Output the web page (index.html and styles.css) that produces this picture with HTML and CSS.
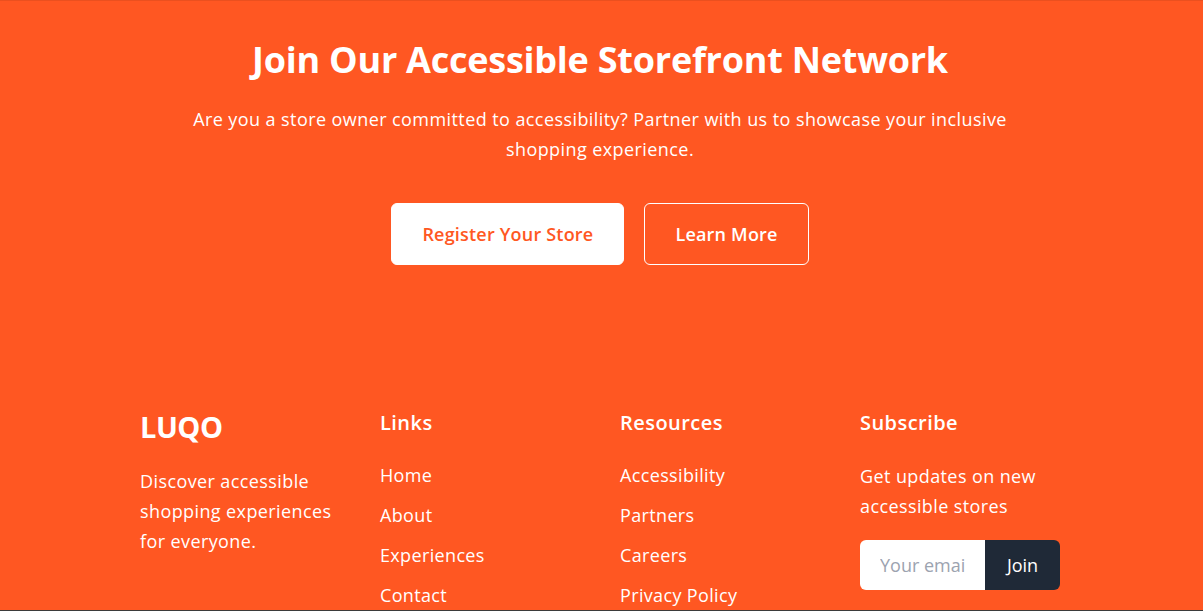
FILE: index.html
```html
<!DOCTYPE html>
<html lang="en">
<head>
<meta charset="utf-8">
<title>LUQO – Join Our Accessible Storefront Network</title>
<link rel="stylesheet" href="styles.css">
</head>
<body>
<div class="page">
  <section class="cta">
    <h1 class="cta-title">Join Our Accessible Storefront Network</h1>
    <p class="cta-text">Are you a store owner committed to accessibility? Partner with us to showcase your inclusive shopping experience.</p>
    <div class="cta-actions">
      <a class="btn btn-solid" href="#">Register Your Store</a>
      <a class="btn btn-outline" href="#">Learn More</a>
    </div>
  </section>
  <footer class="footer">
    <div class="footer-grid">
      <div class="col">
        <div class="brand">LUQO</div>
        <p class="col-text">Discover accessible shopping experiences for everyone.</p>
      </div>
      <div class="col">
        <h3 class="col-title">Links</h3>
        <ul class="col-list">
          <li><a href="#">Home</a></li>
          <li><a href="#">About</a></li>
          <li><a href="#">Experiences</a></li>
          <li><a href="#">Contact</a></li>
        </ul>
      </div>
      <div class="col">
        <h3 class="col-title">Resources</h3>
        <ul class="col-list">
          <li><a href="#">Accessibility</a></li>
          <li><a href="#">Partners</a></li>
          <li><a href="#">Careers</a></li>
          <li><a href="#">Privacy Policy</a></li>
        </ul>
      </div>
      <div class="col">
        <h3 class="col-title">Subscribe</h3>
        <p class="col-text sub-text">Get updates on new accessible stores</p>
        <form class="sub-form">
          <input class="sub-input" type="email" placeholder="Your email" aria-label="Your email">
          <button class="sub-btn" type="button">Join</button>
        </form>
      </div>
    </div>
  </footer>
</div>
</body>
</html>
```
FILE: styles.css
```css
* { box-sizing: border-box; }
html, body { margin: 0; padding: 0; }
body {
  background: #ff5722;
  color: #fff;
  font-family: "Open Sans", "Noto Sans", sans-serif;
  overflow: hidden;
}
body::after {
  content: "";
  position: fixed;
  left: 0;
  right: 0;
  bottom: 0;
  height: 1px;
  background: #3b3b3b;
}
.page {
  padding-right: 3px;
  box-shadow: inset 0 1px 0 rgba(0,0,0,0.08);
}
.cta {
  padding-top: 40px;
  text-align: center;
}
.cta-title {
  margin: 0 0 24px;
  font-size: 36px;
  line-height: 40px;
  font-weight: 700;
  letter-spacing: -0.24px;
}
.cta-text {
  margin: 0 auto 39px;
  max-width: 830px;
  font-size: 18px;
  line-height: 30px;
  letter-spacing: 0.42px;
}
.cta-actions {
  display: flex;
  justify-content: center;
  gap: 20px;
}
.btn {
  display: inline-block;
  padding: 16px 30px;
  border: 1px solid #fff;
  border-radius: 6px;
  font-size: 18px;
  line-height: 28px;
  font-weight: 600;
  letter-spacing: 0.2px;
  text-decoration: none;
}
.btn-solid { background: #fff; color: #ff5722; }
.btn-outline { background: transparent; color: #fff; }
.footer {
  padding-top: 144px;
}
.footer-grid {
  width: 920px;
  margin: 0 auto;
  display: grid;
  grid-template-columns: repeat(4, 200px);
  column-gap: 40px;
}
.brand {
  font-size: 29px;
  line-height: 36px;
  font-weight: 700;
  letter-spacing: -0.5px;
  margin-bottom: 21px;
}
.col-title {
  margin: 0 0 24px;
  font-size: 20px;
  line-height: 28px;
  font-weight: 600;
  letter-spacing: 0.45px;
}
.col-text {
  margin: 0;
  font-size: 18px;
  line-height: 30px;
  letter-spacing: 0.4px;
}
.col-list {
  list-style: none;
  margin: 2px 0 0;
  padding: 0;
  display: flex;
  flex-direction: column;
  gap: 12px;
}
.col-list a {
  display: block;
  color: #fff;
  text-decoration: none;
  font-size: 18px;
  line-height: 28px;
  letter-spacing: 0.35px;
}
.sub-text { margin-bottom: 19px; }
.sub-form {
  display: flex;
  width: 200px;
}
.sub-input {
  width: 125px;
  height: 50px;
  border: none;
  border-radius: 6px 0 0 6px;
  padding: 0 20px;
  font-family: inherit;
  font-size: 18px;
  color: #111827;
  background: #fff;
  outline: none;
}
.sub-input::placeholder { color: #9ca3af; }
.sub-btn {
  width: 75px;
  height: 50px;
  border: none;
  border-radius: 0 6px 6px 0;
  background: #1f2937;
  color: #fff;
  font-family: inherit;
  font-size: 18px;
  padding: 0;
}
```
